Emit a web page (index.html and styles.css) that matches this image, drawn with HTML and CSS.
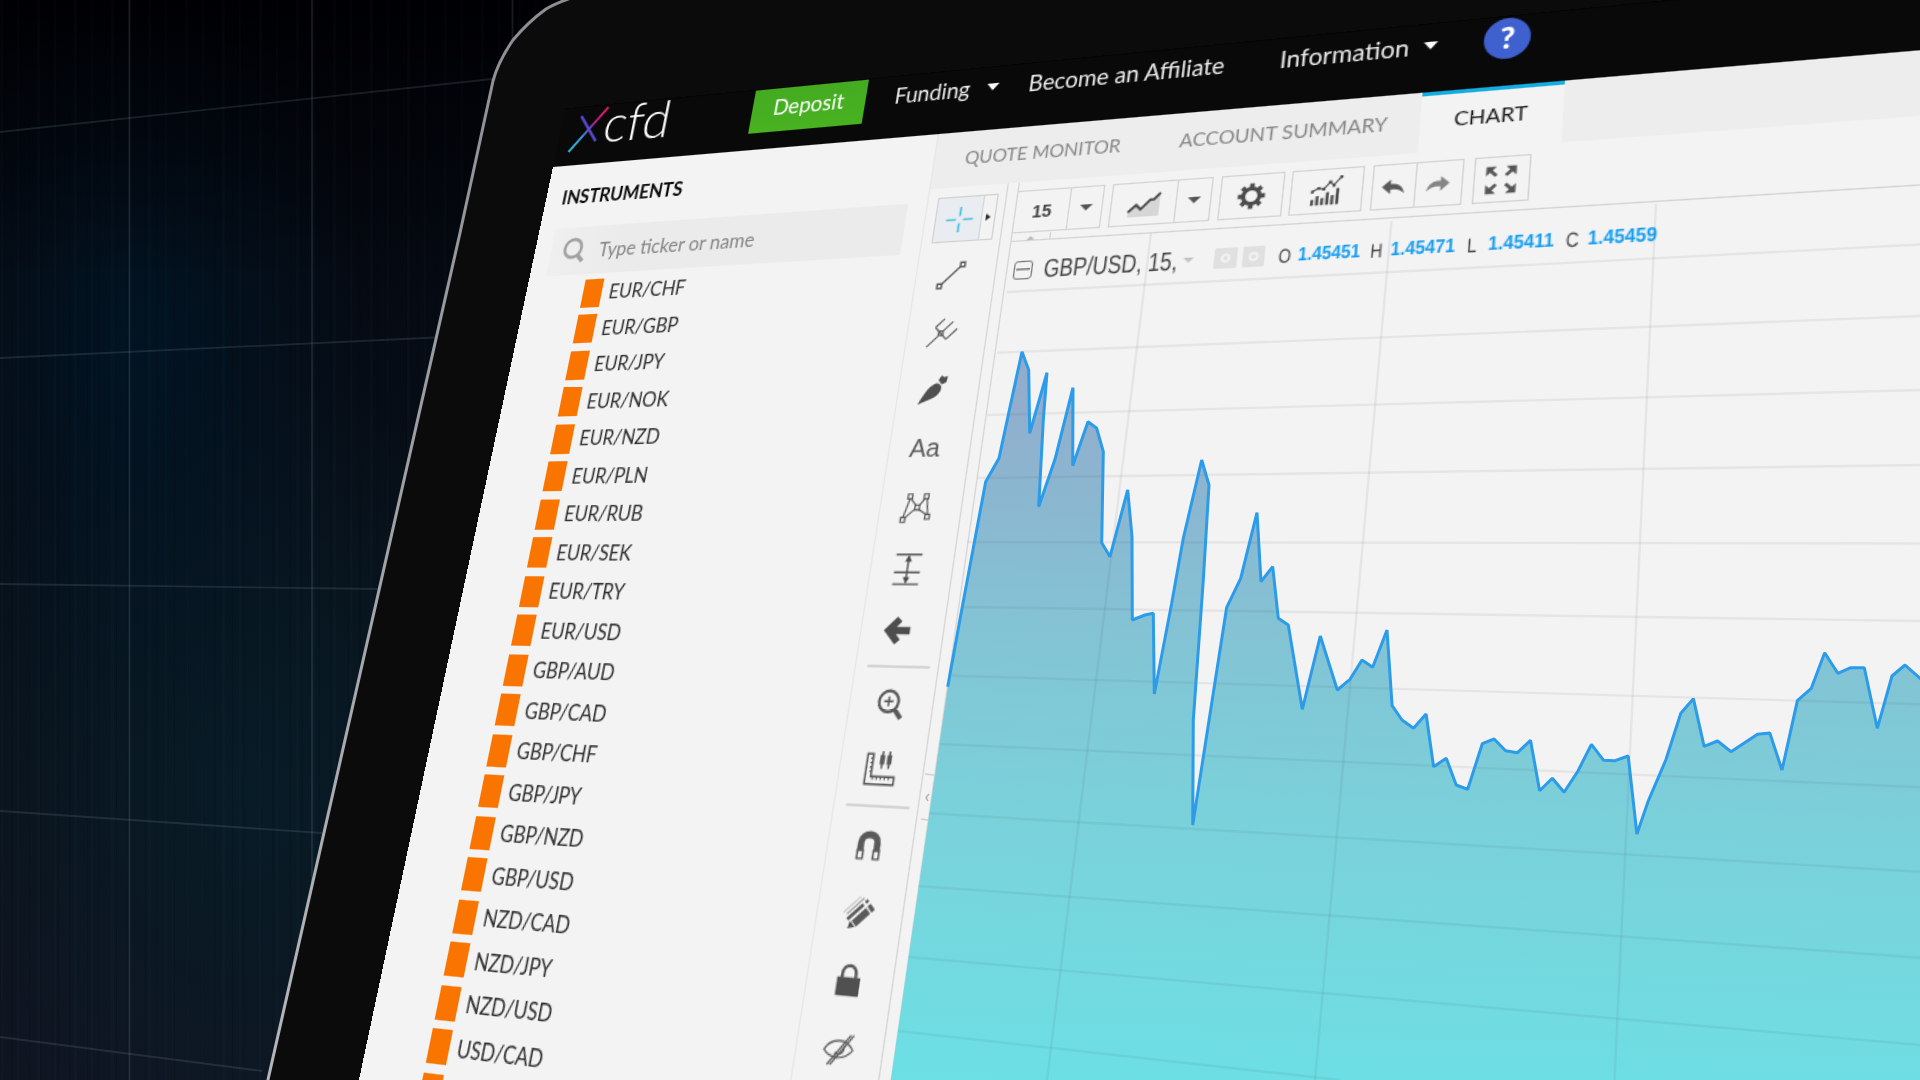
FILE: index.html
```html
<!DOCTYPE html>
<html lang="en">
<head>
<meta charset="utf-8">
<title>xcfd trading platform</title>
<link rel="stylesheet" href="styles.css">
</head>
<body>
<div class="scene">
  <svg class="backdrop" viewBox="0 0 1920 1080">
    <defs>
      <linearGradient id="rim" gradientUnits="userSpaceOnUse" x1="0" y1="0" x2="0" y2="1080"><stop offset="0" stop-color="#8d8e93"/><stop offset="1" stop-color="#b4b6ba"/></linearGradient>
    </defs>
    <g class="room-grid">
      <path d="M129.5 0V1080M312 0V1080M512.5 0V1080"/>
      <path d="M0 132L492 79M0 358L435 337.5M0 584L378 589M0 811L322 833M0 1037L262 1071"/>
    </g>
    <path class="device" d="M267 1084L460 233L493 81Q498 62 513 40Q528 22 546 9Q556 3 574 -3H1930V1084Z"/>
    <path class="device-rim" stroke="url(#rim)" d="M267 1084L460 233L493 81Q498 62 513 40Q528 22 546 9Q556 3 574 -3"/>
  </svg>

  <div class="screen">
    <header class="topbar">
      <div class="logo">
        <svg width="36" height="44" viewBox="0 0 36 44">
          <defs><linearGradient id="slash" gradientUnits="userSpaceOnUse" x1="2" y1="42" x2="34" y2="3"><stop offset="0" stop-color="#2fc4d8"/><stop offset=".3" stop-color="#3f9fe0"/><stop offset=".5" stop-color="#5a4fd0"/><stop offset=".68" stop-color="#c01a88"/><stop offset="1" stop-color="#ee1a60"/></linearGradient></defs>
          <path d="M8 9L27.500 34" stroke="#5548c8" stroke-width="2.600"/>
          <path d="M2.500 42L33.500 3" stroke="url(#slash)" stroke-width="2.400"/>
        </svg>
        <span class="wordmark">cfd</span>
      </div>
      <a class="deposit">Deposit</a>
      <a class="nav funding">Funding</a><i class="caret"></i>
      <a class="nav affiliate">Become an Affiliate</a>
      <a class="nav info">Information</a><i class="caret"></i>
      <a class="help">?</a>
    </header>

    <div class="body">
      <aside class="sidebar">
        <h2>INSTRUMENTS</h2>
        <div class="search">
          <svg width="22" height="24" viewBox="0 0 22 24"><circle cx="9.500" cy="10" r="8"/><path d="M14.500 16L20.500 22" stroke-width="3.800"/></svg>
          <span>Type ticker or name</span>
        </div>
        <ul class="list">
          <li>EUR/CHF</li><li>EUR/GBP</li><li>EUR/JPY</li><li>EUR/NOK</li><li>EUR/NZD</li>
          <li>EUR/PLN</li><li>EUR/RUB</li><li>EUR/SEK</li><li>EUR/TRY</li><li>EUR/USD</li>
          <li>GBP/AUD</li><li>GBP/CAD</li><li>GBP/CHF</li><li>GBP/JPY</li><li>GBP/NZD</li>
          <li>GBP/USD</li><li>NZD/CAD</li><li>NZD/JPY</li><li>NZD/USD</li><li>USD/CAD</li><li></li>
        </ul>
      </aside>

      <main class="main">
        <nav class="tabs">
          <a class="quote">QUOTE MONITOR</a>
          <a class="account">ACCOUNT SUMMARY</a>
          <a class="active">CHART</a>
        </nav>
        <div class="workspace">
          <div class="tools">
            <div class="tool"><div class="cross">
              <svg width="37" height="36" viewBox="0 0 37 36"><path d="M19.500 8V15.500M19.500 21.500V29M8.500 18.500H16.500M22.500 18.500H30.500"/></svg>
              <span class="more"><i></i></span>
            </div></div>
            <div class="tool"><svg viewBox="0 0 28 28"><path d="M6.500 21.500L21.500 6.500"/><path d="M2.500 21.500h4v4h-4zM21.500 2.500h4v4h-4z"/></svg></div>
            <div class="tool"><svg viewBox="0 0 28 28" class="thin"><path d="M1 27L10.500 17.500M7 9.500L18 20.500M7 9.500L14.500 2M14.500 13L22.500 5M18 20.500L27 11.500"/><path d="M10.500 13h4v4h-4z"/></svg></div>
            <div class="tool"><svg viewBox="0 0 28 28" class="solid"><path d="M1 27C4 21 8 11 15 8.500C19.500 8 21.500 11.500 20 15.500C17 22 9 23 1 27Z"/><path d="M17 5.500L19.500 1.500L22 3L25 2L24.500 7.500L20.500 9.500Z"/></svg></div>
            <div class="tool aa">Aa</div>
            <div class="tool"><svg viewBox="0 0 28 28" class="thin"><path d="M3.500 22L7.500 6M5 22.500L13 15M9 6.500L14 12M21 6L16.500 12M23 6.500L25 19M16.500 15L24 19.500"/><path d="M5.500 2h4v4h-4zM20 2h4v4h-4zM13 11.500h4v4h-4zM1.500 22h4v4h-4zM23 19.500h4v4h-4z"/></svg></div>
            <div class="tool"><svg viewBox="0 0 28 28"><path d="M3 2H26M3 17H26M3 27H26M14.500 5V24"/><path class="fill" d="M14.500 2L17.500 8H11.500ZM14.500 27L17.500 21H11.500Z"/></svg></div>
            <div class="tool"><svg viewBox="0 0 28 28"><path class="heavy" d="M25 14H9M15 4.500L6 14L15 23.500"/></svg></div>
            <hr>
            <div class="tool low"><svg viewBox="0 0 28 28"><circle cx="12.500" cy="11.500" r="8.500" stroke-width="2.400"/><path d="M12.500 7.500V15.500M8.500 11.500H16.500"/><path d="M18.500 18L24.500 25" stroke-width="4"/></svg></div>
            <div class="tool low"><svg viewBox="0 0 28 28"><path d="M1.500 2.500h5v18h20v6h-25z"/><path d="M4.500 6h2M4.500 9.500h2M4.500 13h2M4.500 16.500h2M8 20.500v2.500M11.500 20.500v2.500M15 20.500v2.500M18.500 20.500v2.500M22 20.500v2.500" stroke-width="1.200"/><path d="M14.500 0V14M20.500 0V14"/><path d="M14.500 3V10.500M20.500 3V10.500" stroke-width="4"/></svg></div>
            <hr>
            <div class="tool low"><svg viewBox="0 0 28 28"><path d="M7 19V12C7 3.500 21 3.500 21 12V19" stroke-width="5.500"/><path d="M4.800 18h4.800v6.500h-4.800zM18.500 18h4.800v6.500h-4.800z" fill="#f3f3f3"/></svg></div>
            <div class="tool low"><svg viewBox="0 0 28 28"><path d="M11 23L21.500 12.500M22.500 11.500L25 9" stroke-width="6"/><path class="fill" d="M6 27L7.500 21L12 25.500Z"/><path d="M5 20L17 8M18.500 6.500L20.500 4.500" stroke-width="2.600"/><path d="M4 16L17 3" stroke-width="1.200" opacity=".6"/><path d="M1 15L14 2" stroke-width="1" opacity=".35"/></svg></div>
            <div class="tool low"><svg viewBox="0 0 28 28"><path class="fill" d="M4 12h19.500v14h-19.500z"/><path d="M8 13V9.500C8 1 19.500 1 19.500 9.500V13" stroke-width="2.600"/></svg></div>
            <div class="tool low"><svg viewBox="0 0 28 28" class="thin"><path d="M2 15C7 5.500 20 5.500 26 14C20 22 8 22 2 15ZM6 26L23 3M8.500 26L25.500 3"/><path d="M18.500 11C19.500 17 14 19 11 16.500"/></svg></div>
          </div>

          <div class="chart-panel">
            <div class="toolbar">
              <div class="group interval"><b>15</b><span><i class="down"></i></span></div>
              <div class="group style"><b><svg width="28" height="22" viewBox="0 0 30 24"><path fill="#d6d6d6" d="M2 23V19L9 12L14 15L22 8L28 4V23Z"/><path d="M2 18.500L8.500 12.500L12.500 16.500L20 8.500H23L28 3" stroke="#4d4d4d" stroke-width="2.200" fill="none"/></svg></b><span><i class="down"></i></span></div>
              <div class="group gear"><svg width="23" height="23" viewBox="0 0 24 24"><circle cx="12" cy="12" r="6.300" fill="none" stroke="#4d4d4d" stroke-width="3.200"/><path d="M12 1.600V5.500M12 18.500V22.400M1.600 12H5.500M18.500 12H22.400M4.700 4.700L7.500 7.500M16.500 16.500L19.300 19.300M4.700 19.300L7.500 16.500M16.500 7.500L19.300 4.700" stroke="#4d4d4d" stroke-width="3.600"/></svg></div>
              <div class="group study"><svg width="25" height="25" viewBox="0 0 28 28"><path d="M3.500 26V21M7.500 26V18M11.500 26V20M15.500 26V15M19.500 26V18M23.500 26V12" stroke="#4d4d4d" stroke-width="2.400"/><path d="M3 14L8 11L12 12.500L17 6.500L20 9L26 2" stroke="#4d4d4d" stroke-width="1.200" fill="none"/><path d="M2 13h2.500v2.500h-2.500zM7 10h2.500v2.500h-2.500zM11 11h2.500v2.500h-2.500zM16 5h2.500v2.500h-2.500zM19 8h2.500v2.500h-2.500zM24.500 1h2.500v2.500h-2.500z" fill="#4d4d4d"/></svg></div>
              <div class="group history"><b><svg width="18" height="14" viewBox="0 0 20 16"><path fill="#5a5a5a" d="M8 1V5C14 5 18 8 19 14C16 10.500 13 10 8 10V14L1 7.500Z"/></svg></b><span><svg width="18" height="14" viewBox="0 0 20 16"><path fill="#858585" d="M12 1V5C6 5 2 8 1 14C4 10.500 7 10 12 10V14L19 7.500Z"/></svg></span></div>
              <div class="group full"><svg width="25" height="24" viewBox="0 0 26 26"><path d="M9.500 9.500L5 5M16.500 9.500L21 5M9.500 16.500L5 21M16.500 16.500L21 21" stroke="#555" stroke-width="2.600"/><path fill="#555" d="M2 2h7.500L2 9.500zM24 2v7.500L16.500 2zM2 24v-7.500L9.500 24zM24 24h-7.500L24 16.500z"/></svg></div>
            </div>
            <div class="collapse"><span><i></i></span></div>
            <div class="legend">
              <i class="minus"></i>
              <span class="symbol"><em>GBP/USD, 15,</em></span>
              <i class="down faint"></i>
              <span class="chip"></span><span class="chip"></span>
              <span class="ohlc"><em>O</em></span><strong><em>1.45451</em></strong>
              <span class="ohlc"><em>H</em></span><strong><em>1.45471</em></strong>
              <span class="ohlc"><em>L</em></span><strong><em>1.45411</em></strong>
              <span class="ohlc"><em>C</em></span><strong><em>1.45459</em></strong>
            </div>
          </div>
        </div>
      </main>
    </div>
  </div>

  <svg class="chart" viewBox="0 0 1920 1080">
    <defs>
      <linearGradient id="area" gradientUnits="userSpaceOnUse" x1="1000" y1="340" x2="970" y2="1090">
        <stop offset="0" stop-color="#95a9cb"/><stop offset=".2" stop-color="#8bb6d0"/><stop offset=".38" stop-color="#83c3d4"/><stop offset=".6" stop-color="#7bd0da"/><stop offset=".8" stop-color="#74d8df"/><stop offset="1" stop-color="#6be0e5"/>
      </linearGradient>
    </defs>
    <path fill="url(#area)" d="M947.700 686.700L961.700 610L985.700 481.700L999 458.300L1008.300 415L1022 351.700L1028.700 370L1029.700 433.300L1047 372.700L1043.300 420L1038.700 506.700L1055 459.300L1073 387.700L1072.700 465.700L1088 421.700L1096.700 428.300L1103.300 451.700L1101.700 542.700L1110 556.700L1127.700 490L1132 536.700L1132.300 620L1145 615L1153.300 613.300L1154.300 694L1171.700 603.300L1183.300 538.300L1201.700 460L1209 485L1203.300 580L1193.300 720L1192.700 825L1226.700 607.300L1240.700 578.300L1257 512.700L1261 581.700L1272.700 566.700L1278.300 618.300L1288.300 625L1302.300 709.300L1320.300 636L1337.300 690L1350 679.300L1362 660L1372.700 667.300L1387 630L1392.100 705.700L1402 720L1413.500 728.300L1426.100 714L1433.600 766.700L1446.300 758.300L1456.200 785L1467.700 789.300L1482.300 743.700L1494.100 739L1505.600 750.700L1517.500 752.700L1530.500 740.300L1539.600 790.700L1552.300 778.300L1564.100 792.300L1578 771L1591.400 744.300L1603.700 760.300L1615.100 760.700L1628.200 756L1636.900 834L1648 801.700L1665.800 760L1680.800 713.300L1693.400 698.700L1704.100 746.300L1717.600 741L1731 751.700L1757.500 734.300L1769.800 733L1782 770L1797.400 700.700L1811.300 688.300L1824.700 652.700L1837.800 673.300L1850.800 667.700L1864.300 667.700L1877.300 728.300L1892 676L1905 665L1922 680V1082H890.500Z"/>
    <path class="gridlines" d="M1007 292L1920 244.500M997 352.700L1920 316M987 415L1920 390M977 478L1920 465M967 542L1920 543.500M963 607L1920 621M951.700 675.700L1920 704.300M939 744L1920 787.300M929 813.300L1920 871.700M918 886L1920 957.700M908 957L1920 1045M898 1031L1340 1080"/>
    <path class="gridlines" d="M1151 233L1047 1080M1391.500 221L1315 1080M1656 204L1614.500 1080"/>
    <path class="price" d="M947.700 686.700L961.700 610L985.700 481.700L999 458.300L1008.300 415L1022 351.700L1028.700 370L1029.700 433.300L1047 372.700L1043.300 420L1038.700 506.700L1055 459.300L1073 387.700L1072.700 465.700L1088 421.700L1096.700 428.300L1103.300 451.700L1101.700 542.700L1110 556.700L1127.700 490L1132 536.700L1132.300 620L1145 615L1153.300 613.300L1154.300 694L1171.700 603.300L1183.300 538.300L1201.700 460L1209 485L1203.300 580L1193.300 720L1192.700 825L1226.700 607.300L1240.700 578.300L1257 512.700L1261 581.700L1272.700 566.700L1278.300 618.300L1288.300 625L1302.300 709.300L1320.300 636L1337.300 690L1350 679.300L1362 660L1372.700 667.300L1387 630L1392.100 705.700L1402 720L1413.500 728.300L1426.100 714L1433.600 766.700L1446.300 758.300L1456.200 785L1467.700 789.300L1482.300 743.700L1494.100 739L1505.600 750.700L1517.500 752.700L1530.500 740.300L1539.600 790.700L1552.300 778.300L1564.100 792.300L1578 771L1591.400 744.300L1603.700 760.300L1615.100 760.700L1628.200 756L1636.900 834L1648 801.700L1665.800 760L1680.800 713.300L1693.400 698.700L1704.100 746.300L1717.600 741L1731 751.700L1757.500 734.300L1769.800 733L1782 770L1797.400 700.700L1811.300 688.300L1824.700 652.700L1837.800 673.300L1850.800 667.700L1864.300 667.700L1877.300 728.300L1892 676L1905 665L1922 680"/>
    <path class="handle" d="M925 774L934 775M921 819L928 820"/>
    <path class="handle-mark" d="M929 794L926 797.500L928 801"/>
  </svg>
</div>
</body>
</html>
```
FILE: styles.css
```css
* { box-sizing: border-box; }

body {
  margin: 0;
  background: #000;
  font-family: Lato, "Open Sans", sans-serif;
}

.scene {
  position: relative;
  width: 1920px;
  height: 1080px;
  overflow: hidden;
  background:
    repeating-linear-gradient(90deg, rgba(0, 0, 0, .16) 0 1px, transparent 1px 11px, rgba(0, 0, 0, .1) 11px 13px, transparent 13px 29px),
    repeating-linear-gradient(90deg, rgba(60, 110, 140, .03) 0 3px, transparent 3px 17px, rgba(60, 110, 140, .03) 17px 19px, transparent 19px 37px),
    linear-gradient(180deg, #000003 0, rgba(0, 0, 4, .6) 80px, transparent 280px),
    radial-gradient(ellipse 230px 420px at 140px 350px, rgba(0, 22, 38, .8), transparent),
    radial-gradient(ellipse 300px 420px at 250px 790px, rgba(7, 30, 41, .8), transparent),
    linear-gradient(180deg, #02040a 0, #060c15 35%, #09121b 65%, #101522 100%);
}

.backdrop, .chart {
  position: absolute;
  top: 0;
  left: 0;
  width: 1920px;
  height: 1080px;
}

.room-grid { fill: none; stroke: rgba(150, 170, 180, .16); stroke-width: 1.8; }
.device { fill: #0b0b0b; }
.device-rim { fill: none; stroke-width: 3; }

/* The tablet display, tilted in perspective */
.screen {
  position: absolute;
  top: 0;
  left: 0;
  width: 1110px;
  height: 850px;
  transform-origin: 0 0;
  transform: matrix3d(.8754536, -.1230684, 0, -.0002254, -.317394, 1.0494841, 0, -.0001603, 0, 0, 1, 0, 570.4567, 109.2784, 0, 1.0088165);
  display: flex;
  flex-direction: column;
  background: #f3f3f3;
  overflow: hidden;
}

.topbar {
  flex: 0 0 55px;
  display: flex;
  align-items: flex-start;
  background: #090909;
  border-top: 1px solid #040404;
  color: #ececec;
}
.logo { width: 100px; margin-left: 10px; display: flex; }
.logo svg { flex: none; margin-top: -1px; }
.wordmark {
  margin-left: -3px;
  font-size: 48px;
  font-weight: 300;
  line-height: 33px;
  height: 40px;
  letter-spacing: 0;
  color: #fff;
}
.deposit {
  width: 102px;
  height: 39px;
  margin-left: 74px;
  background: linear-gradient(#44ab21, #48b221);
  color: #fff;
  font-size: 18.5px;
  line-height: 34px;
  text-align: center;
}
.nav { font-size: 18.300px; line-height: 35px; white-space: nowrap; }
.funding { width: 78px; margin-left: 25.500px; }
.affiliate { width: 196.500px; margin-left: 25px; }
.info { width: 104px; }
.caret {
  margin-top: 14px;
  border: 5px solid transparent;
  border-top: 6px solid #fff;
  border-bottom: 0;
}
.help {
  width: 32px;
  height: 32px;
  margin: 1px 0 0 32px;
  border-radius: 50%;
  background: #3f60cf;
  color: #fff;
  font-weight: 900;
  font-size: 22px;
  line-height: 31px;
  text-align: center;
}

.body { flex: 1; display: flex; }

.sidebar { width: 355px; padding-left: 16px; border-right: 1px solid #e6e6e6; }
.sidebar h2 {
  height: 58px;
  margin: 0;
  padding-top: 20px;
  font-size: 16.500px;
  line-height: 20px;
  font-weight: 700;
  color: #0c0c0c;
}
.search {
  display: flex;
  align-items: center;
  gap: 13px;
  width: 322px;
  height: 43px;
  padding: 0 0 1px 12px;
  background: linear-gradient(90deg, #efefef, #ebebeb 20%);
  color: #848484;
  font-size: 16.800px;
}
.search svg { fill: none; stroke: #a2a2a2; stroke-width: 2.8; }
.list { list-style: none; margin: 2px 0 0; padding: 0 0 0 40px; }
.list li {
  display: flex;
  align-items: center;
  gap: 7px;
  height: 31.490px;
  padding-bottom: .5px;
  font-size: 16.300px;
  line-height: 20px;
  color: #2e2e2e;
}
.list li::before { content: ""; width: 18px; height: 25px; background: #f97500; }

.main { flex: 1; display: flex; flex-direction: column; }
.tabs {
  flex: 0 0 47px;
  display: flex;
  background: #ededed;
  font-size: 15.100px;
  line-height: 44px;
  color: #868686;
  white-space: nowrap;
}
.tabs .quote { width: 171px; margin-left: 25.500px; font-size: 14.800px; }
.tabs .account { width: 175px; }
.tabs .active {
  width: 97px;
  padding-left: 24px;
  background: #f3f3f3;
  border-top: 3px solid #14ade0;
  line-height: 38px;
  color: #1c1c1c;
}

.workspace { flex: 1; display: flex; }
.tools {
  width: 65px;
  padding: 4px 7px 0;
  border-right: 1px solid #d4d4d4;
}
.tool { display: flex; align-items: center; justify-content: center; width: 43px; height: 46px; }
.tool.low { width: 48px; }
.tool > svg { width: 25px; height: 25px; fill: none; stroke: #5a5a5a; stroke-width: 1.6; }
.tool > svg.thin { stroke-width: 1.300; }
.tool > svg.solid { fill: #505050; stroke: none; }
.tool .fill { fill: #505050; stroke: none; }
.tool .heavy { stroke: #4d4d4d; stroke-width: 6; }
.tools hr { width: 49px; height: 2px; margin: 3px 0 3px 2px; border: 0; background: #d4d4d4; }
.aa { font-family: "Liberation Sans", Arial, sans-serif; font-size: 20px; color: #5c5c5c; }
.cross { flex: none; display: flex; width: 50px; height: 38px; margin-left: 8px; border: 1px solid #cfcfcf; }
.cross svg { background: #e9edf2; stroke: #45bde0; stroke-width: 1.600; }
.more { flex: 1; display: flex; align-items: center; justify-content: center; border-left: 1px solid #d4d4d4; }
.more i { border: 3.500px solid transparent; border-left: 4px solid #333; border-right: 0; }

.chart-panel { flex: 1; margin-left: 8px; border-left: 1px solid #d4d4d4; }
.toolbar { display: flex; height: 43px; padding-top: 7px; }
.group {
  display: flex;
  align-items: center;
  justify-content: center;
  height: 35px;
  border: 1px solid #d2d2d2;
}
.group b { flex: 1; display: flex; justify-content: center; align-items: center; height: 100%; }
.group span { display: flex; justify-content: center; align-items: center; height: 100%; width: 26px; border-left: 1px solid #d2d2d2; }
.interval { width: 70px; margin: 0 6px 0 -1px; font: bold 14px "Liberation Sans", Arial, sans-serif; color: #444; }
.style { width: 77px; margin-right: 5.500px; }
.gear { width: 47px; margin-right: 5px; }
.study { width: 52px; margin-right: 6px; }
.history { width: 63px; margin-right: 7px; }
.history span { width: 32px; }
.full { width: 38px; }
.down { border: 5px solid transparent; border-top: 5px solid #555; border-bottom: 0; }

.collapse { display: flex; height: 6px; border-bottom: 1px solid #d2d2d2; }
.collapse span { display: flex; align-items: flex-end; justify-content: center; width: 31px; border-right: 1px solid #d2d2d2; }
.collapse i { border: 3px solid transparent; border-bottom: 3px solid #b5b5b5; border-top: 0; }

.legend {
  display: flex;
  align-items: center;
  height: 46px;
  padding-left: 5px;
  font-family: "Liberation Sans", Arial, sans-serif;
  white-space: nowrap;
  color: #444;
}
.legend em { display: block; font-style: normal; transform-origin: 0 50%; }
.minus {
  width: 15px;
  height: 15px;
  border: 1.500px solid #777;
  border-radius: 3px;
  background: linear-gradient(#777, #777) center / 11px 1.500px no-repeat;
}
.symbol { width: 107px; margin-left: 9px; font-size: 20.500px; }
.symbol em { transform: scaleX(.78); }
.down.faint { border-width: 4px 4px 0; border-top-color: #c4c4c4; margin-right: 15px; }
.chip {
  width: 16.500px;
  height: 16.500px;
  margin-right: 4px;
  border: 4px solid #e0e0e0;
  border-radius: 1px;
  background: radial-gradient(circle, #e0e0e0 1.500px, #f3f3f3 2px 3px, #e0e0e0 4px);
}
.ohlc { width: 14px; margin-left: 6px; font-size: 15px; }
.ohlc em { transform: scaleX(.78); }
.legend strong { width: 45.300px; font-size: 14.500px; font-weight: 700; color: #149df0; }
.legend strong em { transform: scaleX(.84); }

.gridlines { fill: none; stroke: rgba(50, 60, 70, .07); stroke-width: 2.4; }
.price { fill: none; stroke: #2c9bea; stroke-width: 3; stroke-linejoin: bevel; }
.handle { stroke: #d0d0d0; stroke-width: 1.5; }
.handle-mark { fill: none; stroke: #b0b0b0; stroke-width: 1.5; }
```
